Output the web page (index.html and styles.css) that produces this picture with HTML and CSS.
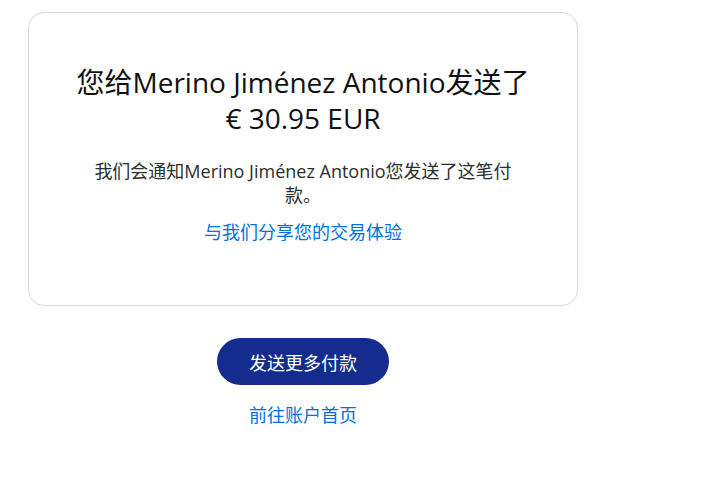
FILE: index.html
```html
<!DOCTYPE html>
<html lang="zh-CN">
<head>
<meta charset="utf-8">
<link rel="stylesheet" href="styles.css">
</head>
<body>
<main class="page">
  <section class="card">
    <h1 class="title">您给Merino Jiménez Antonio发送了<br>€ 30.95 EUR</h1>
    <p class="note">我们会通知Merino Jiménez Antonio您发送了这笔付款。</p>
    <a class="link share" href="#">与我们分享您的交易体验</a>
  </section>
  <div class="actions">
    <a class="btn" href="#">发送更多付款</a>
    <a class="link home" href="#">前往账户首页</a>
  </div>
</main>
</body>
</html>
```
FILE: styles.css
```css
html, body {
  margin: 0;
  padding: 0;
  background: #ffffff;
}
body {
  font-family: "Open Sans", "Noto Sans CJK SC", sans-serif;
  color: #2c2e2f;
}
.page {
  width: 550px;
  padding: 12px 0 0 28px;
}
.card {
  box-sizing: border-box;
  width: 550px;
  height: 294px;
  border: 1px solid #dcd9d1;
  border-radius: 16px;
  display: flex;
  flex-direction: column;
  align-items: center;
  padding-top: 51px;
}
.title {
  margin: 0;
  font-size: 28px;
  font-weight: 400;
  line-height: 36px;
  color: #111111;
  text-align: center;
  white-space: nowrap;
}
.note {
  margin: 23px 0 0;
  width: 420px;
  font-size: 18px;
  line-height: 24px;
  text-align: center;
  color: #2c2e2f;
}
.link {
  color: #0070e0;
  text-decoration: none;
  font-size: 18px;
  line-height: 26px;
}
.share {
  margin-top: 12px;
}
.actions {
  display: flex;
  flex-direction: column;
  align-items: center;
  margin-top: 32px;
}
.btn {
  display: flex;
  align-items: center;
  justify-content: center;
  width: 172px;
  height: 47px;
  border-radius: 24px;
  background: #142c8e;
  color: #ffffff;
  font-size: 18px;
  text-decoration: none;
}
.home {
  margin-top: 17px;
}
```
